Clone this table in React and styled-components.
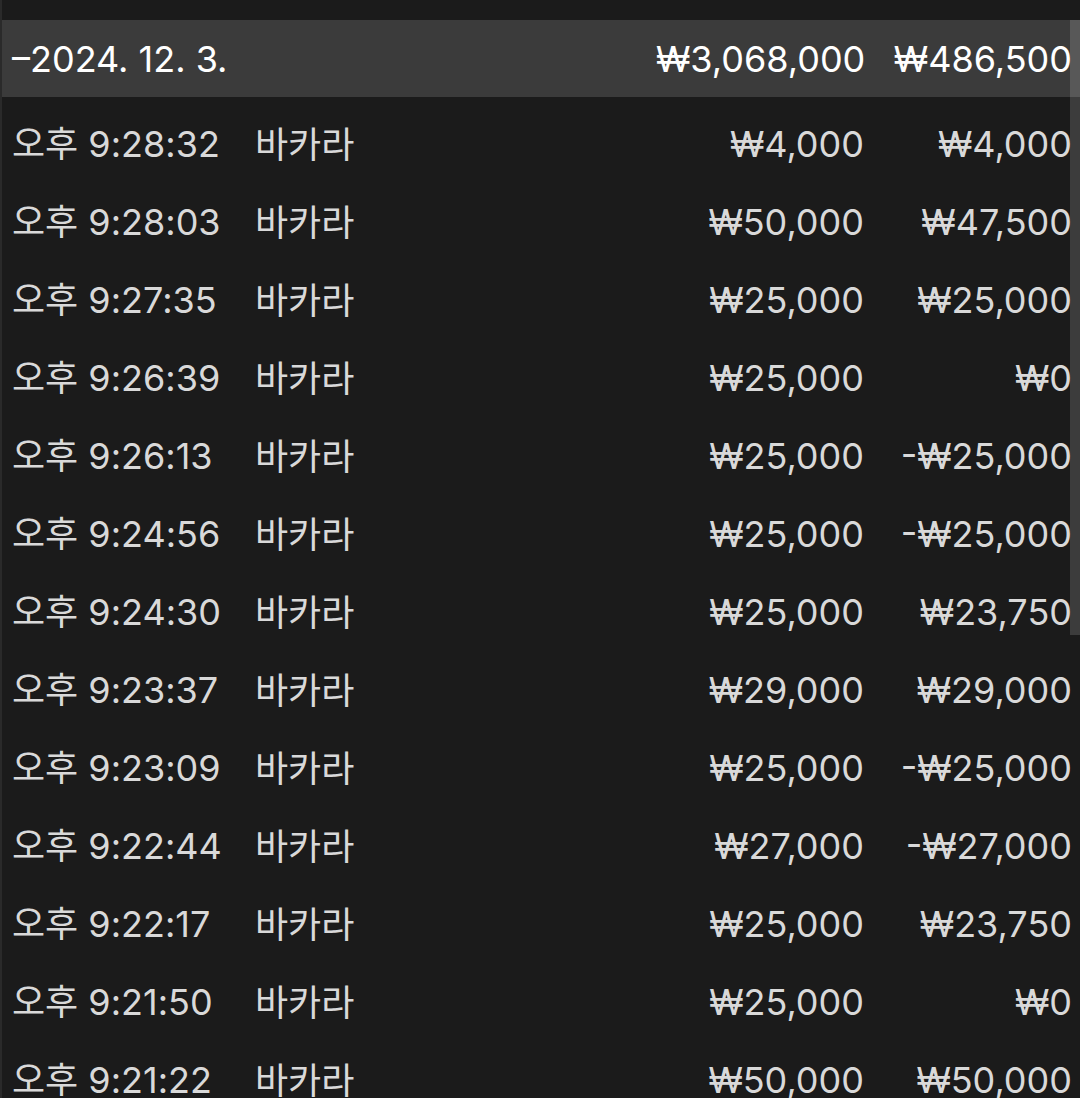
import React from 'react';
import styled, { createGlobalStyle } from 'styled-components';

const GlobalStyle = createGlobalStyle`
  html, body {
    margin: 0;
    padding: 0;
    background: #1b1b1b;
  }
`;

const Page = styled.div`
  position: relative;
  width: 1080px;
  height: 1098px;
  overflow: hidden;
  background: #1b1b1b;
  border-left: 2px solid #2a2a2a;
  box-sizing: border-box;
  font-family: Inter, "Noto Sans CJK KR", sans-serif;
`;

const TopGap = styled.div`
  height: 20px;
`;

const DateRow = styled.div`
  display: flex;
  align-items: center;
  height: 77px;
  padding: 0 8px 0 10px;
  background: #3b3b3b;
  color: #ffffff;
  font-size: 36px;
`;

const List = styled.div`
  padding-top: 8px;
`;

const Row = styled.div`
  display: flex;
  align-items: center;
  height: 78px;
  padding: 0 8px 0 10px;
  color: #d9d9d9;
  font-size: 36px;
`;

const Time = styled.span`
  width: 243px;
  white-space: nowrap;
  position: relative;
  top: -3px;
`;

const Game = styled.span`
  flex: 1;
  white-space: nowrap;
  position: relative;
  top: -2px;
`;

const Amount = styled.span`
  width: 208px;
  text-align: right;
  white-space: nowrap;
`;

const DateLabel = styled.span`
  flex: 1;
  white-space: nowrap;
`;

const Scrollbar = styled.div`
  position: absolute;
  top: 20px;
  right: 0;
  width: 10px;
  height: 615px;
  background: rgba(255, 255, 255, 0.15);
`;

const rows = [
  ['오후 9:28:32', '₩4,000', '₩4,000'],
  ['오후 9:28:03', '₩50,000', '₩47,500'],
  ['오후 9:27:35', '₩25,000', '₩25,000'],
  ['오후 9:26:39', '₩25,000', '₩0'],
  ['오후 9:26:13', '₩25,000', '-₩25,000'],
  ['오후 9:24:56', '₩25,000', '-₩25,000'],
  ['오후 9:24:30', '₩25,000', '₩23,750'],
  ['오후 9:23:37', '₩29,000', '₩29,000'],
  ['오후 9:23:09', '₩25,000', '-₩25,000'],
  ['오후 9:22:44', '₩27,000', '-₩27,000'],
  ['오후 9:22:17', '₩25,000', '₩23,750'],
  ['오후 9:21:50', '₩25,000', '₩0'],
  ['오후 9:21:22', '₩50,000', '₩50,000'],
];

const App = () => {
  return (
    <Page>
      <GlobalStyle />
      <TopGap />
      <DateRow>
        <DateLabel>–2024. 12. 3.</DateLabel>
        <Amount>₩3,068,000</Amount>
        <Amount>₩486,500</Amount>
      </DateRow>
      <List>
        {rows.map((r, i) => (
          <Row key={i}>
            <Time>{r[0]}</Time>
            <Game>바카라</Game>
            <Amount>{r[1]}</Amount>
            <Amount>{r[2]}</Amount>
          </Row>
        ))}
      </List>
      <Scrollbar />
    </Page>
  );
};

export default App;
